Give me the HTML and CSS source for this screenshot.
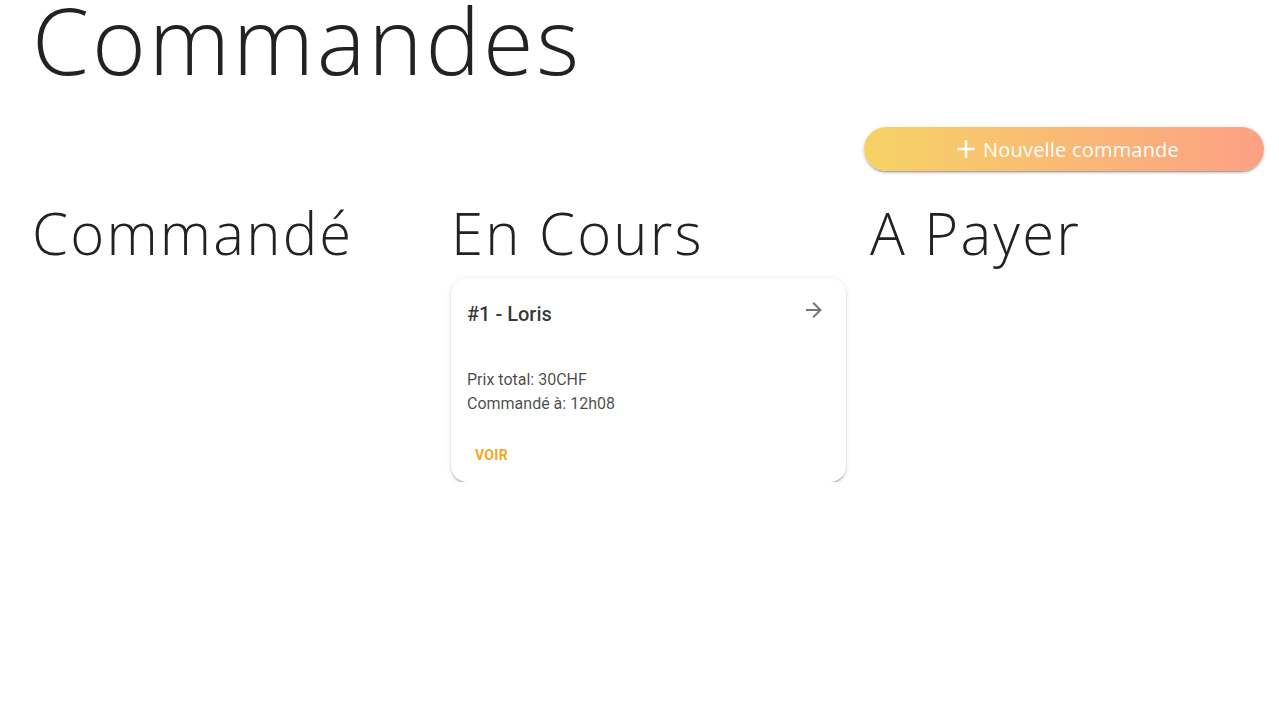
FILE: index.html
```html
<!DOCTYPE html>
<html lang="fr">
<head>
<meta charset="utf-8">
<title>Commandes</title>
<link rel="stylesheet" href="styles.css">
</head>
<body>
<main class="page">
  <h1 class="page-title">Commandes</h1>
  <div class="toolbar">
    <button class="new-btn" type="button">
      <svg class="plus" viewBox="0 0 24 24" width="24" height="24"><path d="M19 13h-6v6h-2v-6H5v-2h6V5h2v6h6v2z" fill="currentColor"/></svg>
      <span>Nouvelle commande</span>
    </button>
  </div>
  <div class="columns">
    <section class="column">
      <h2 class="col-title">Commandé</h2>
    </section>
    <section class="column">
      <h2 class="col-title">En Cours</h2>
      <article class="card">
        <header class="card-head">
          <span class="card-title">#1 - Loris</span>
          <svg class="arrow" viewBox="0 0 24 24" width="24" height="24"><path d="M4 11v2h12l-5.5 5.5 1.42 1.42L19.84 12l-7.92-7.92L10.5 5.5 16 11H4z" fill="currentColor"/></svg>
        </header>
        <div class="card-body">
          <div>Prix total: 30CHF</div>
          <div>Commandé à: 12h08</div>
        </div>
        <div class="card-actions">
          <button class="voir" type="button">Voir</button>
        </div>
      </article>
    </section>
    <section class="column">
      <h2 class="col-title">A Payer</h2>
    </section>
  </div>
</main>
</body>
</html>
```

FILE: styles.css
```css
html, body {
  margin: 0;
  padding: 0;
  background: #ffffff;
}

body {
  font-family: "Open Sans", "Lato", sans-serif;
  color: rgba(0, 0, 0, 0.87);
}

.page {
  padding: 0 2px 0 20px;
}

.page-title {
  margin: 0 12px;
  font-size: 92px;
  font-weight: 300;
  line-height: 80px;
  letter-spacing: 2.8px;
  color: #222;
}

.toolbar {
  display: flex;
  justify-content: flex-end;
  padding: 47px 13px 0 0;
}

.new-btn {
  width: 400px;
  height: 44px;
  border: none;
  border-radius: 22px;
  background: linear-gradient(to right, #f6d365, #fda085);
  box-shadow: 0 3px 1px -2px rgba(0,0,0,.2), 0 2px 2px 0 rgba(0,0,0,.14), 0 1px 5px 0 rgba(0,0,0,.12);
  color: #fff;
  font-family: "Open Sans", "Lato", sans-serif;
  font-size: 20px;
  font-weight: 400;
  letter-spacing: 0.2px;
  display: flex;
  align-items: center;
  justify-content: center;
  gap: 2px;
  padding: 0 0 0 2px;
  cursor: pointer;
}

.plus {
  width: 30px;
  height: 30px;
}

.columns {
  display: grid;
  grid-template-columns: repeat(3, 419px);
  margin-top: 20px;
}

.column {
  padding: 0 12px;
}

.col-title {
  margin: 0;
  font-size: 58px;
  font-weight: 300;
  line-height: 84px;
  letter-spacing: 2.2px;
  color: #222;
}

.card {
  margin-top: 3px;
  width: 395px;
  background: #fff;
  border-radius: 16px;
  box-shadow: 0 3px 1px -2px rgba(0,0,0,.2), 0 2px 2px 0 rgba(0,0,0,.14), 0 1px 5px 0 rgba(0,0,0,.12);
  font-family: "Roboto", sans-serif;
}

.card-head {
  display: flex;
  justify-content: space-between;
  align-items: flex-start;
  padding: 20px 20px 0 16px;
}

.card-title {
  font-size: 20px;
  font-weight: 500;
  line-height: 32px;
  color: rgba(0, 0, 0, 0.8);
}

.arrow {
  color: rgba(0, 0, 0, 0.54);
  margin-top: 0;
}

.card-body {
  padding: 38px 16px 0 16px;
  font-size: 16px;
  line-height: 24px;
  color: rgba(0, 0, 0, 0.72);
}

.card-actions {
  padding: 24px 8px 12px 8px;
}

.voir {
  border: none;
  background: transparent;
  font-family: "Roboto", sans-serif;
  font-size: 14px;
  font-weight: 700;
  text-transform: uppercase;
  letter-spacing: 0.3px;
  color: #f5a623;
  padding: 0 16px;
  height: 30px;
  line-height: 30px;
}
```
